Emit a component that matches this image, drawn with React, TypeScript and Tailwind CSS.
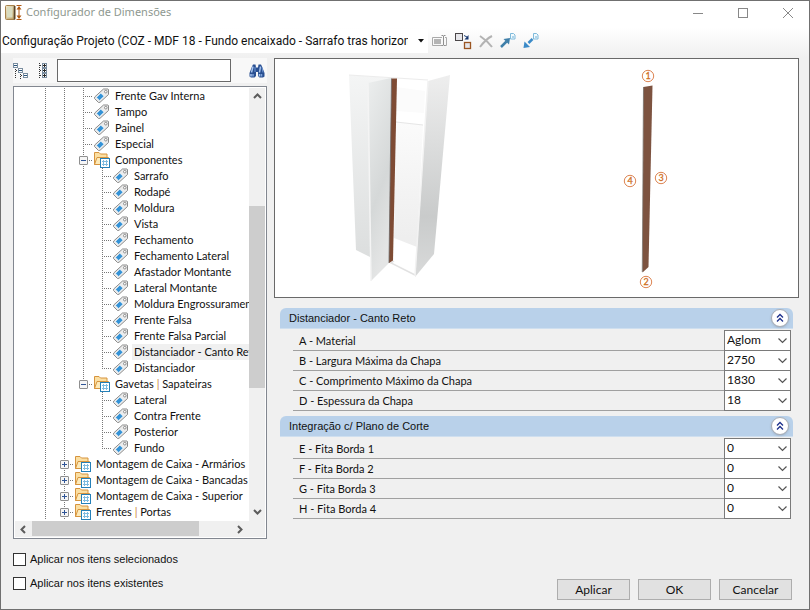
import { useState } from 'react'

type TreeItem = {
  label: string
  // vertical guide columns: 1 = line, 0 = blank
  guides: number[]
  node: 'leaf' | 'last' | 'open' | 'closed'
}

type Field = {
  label: string
  value: string
}

const leaf = (label: string, guides: number[]): TreeItem => ({ label, guides, node: 'leaf' })

const TREE: TreeItem[] = [
  ...['Frente Gav Interna', 'Tampo', 'Painel', 'Especial'].map((l) => leaf(l, [1, 1])),
  { label: 'Componentes', guides: [1, 1], node: 'open' },
  ...[
    'Sarrafo',
    'Rodapé',
    'Moldura',
    'Vista',
    'Fechamento',
    'Fechamento Lateral',
    'Afastador Montante',
    'Lateral Montante',
    'Moldura Engrossuramento',
    'Frente Falsa',
    'Frente Falsa Parcial',
    'Distanciador - Canto Reto',
  ].map((l) => leaf(l, [1, 1, 1])),
  { label: 'Distanciador', guides: [1, 1, 1], node: 'last' },
  { label: 'Gavetas | Sapateiras', guides: [1, 1], node: 'open' },
  ...['Lateral', 'Contra Frente', 'Posterior'].map((l) => leaf(l, [1, 1, 0])),
  { label: 'Fundo', guides: [1, 1, 0], node: 'last' },
  { label: 'Montagem de Caixa - Armários', guides: [1], node: 'closed' },
  { label: 'Montagem de Caixa - Bancadas', guides: [1], node: 'closed' },
  { label: 'Montagem de Caixa - Superior', guides: [1], node: 'closed' },
  { label: 'Frentes | Portas', guides: [1], node: 'closed' },
]

const MATERIAL: Field[] = [
  { label: 'A - Material', value: 'Aglom' },
  { label: 'B - Largura Máxima da Chapa', value: '2750' },
  { label: 'C - Comprimento Máximo da Chapa', value: '1830' },
  { label: 'D - Espessura da Chapa', value: '18' },
]

const CUTTING: Field[] = [
  { label: 'E - Fita Borda 1', value: '0' },
  { label: 'F - Fita Borda 2', value: '0' },
  { label: 'G - Fita Borda 3', value: '0' },
  { label: 'H - Fita Borda 4', value: '0' },
]

function AppIcon() {
  return (
    <svg width="18" height="16" viewBox="0 0 18 16" aria-hidden="true">
      <defs>
        <linearGradient id="cab" x1="0" y1="0" x2="1" y2="1">
          <stop offset="0" stopColor="#f3ead0" />
          <stop offset="1" stopColor="#b89a5c" />
        </linearGradient>
      </defs>
      <rect x="0.5" y="0.5" width="9.5" height="14" rx="1" fill="url(#cab)" stroke="#a8834c" />
      <rect x="2" y="2" width="5.5" height="10.5" fill="#d9dcc0" />
      <path d="M9.5 1v13.500" stroke="#57452d" strokeWidth="1.500" />
      <path d="M11.500 0.500h5M11.500 14.500h5M14 2v11" stroke="#b05a14" />
      <path d="M14 1l-2.500 3.500h5zM14 14l-2.500-3.500h5z" fill="#b05a14" />
    </svg>
  )
}

function RenameIcon() {
  return (
    <svg width="16" height="16" viewBox="0 0 16 16" fill="none" stroke="#a9a9a9" aria-hidden="true">
      <path d="M10 4.500H0.500v8H10M13 4.500h1.500v8H13" />
      <rect x="2" y="6" width="7" height="5" fill="#b4b4b4" stroke="none" />
      <path d="M9.500 2.500h1.500l0.500 0.500 0.500-0.500h1.500M11.500 3v9M9.500 12.500h1.500l0.500-0.500 0.500 0.500h1.500" stroke="#8f8f8f" />
    </svg>
  )
}

function CopyToIcon() {
  return (
    <svg width="17" height="17" viewBox="0 0 17 17" fill="none" aria-hidden="true">
      <rect x="0.500" y="0.500" width="7" height="7" fill="#e6e6ea" stroke="#4a4648" />
      <rect x="9.500" y="9.500" width="6" height="6" fill="#e6e6ea" stroke="#9a5420" strokeWidth="1.300" />
      <path d="M9 2.500l3 1.500" stroke="#1d3f78" />
      <path d="M13.500 2v4.500H9.500z" fill="#16356e" />
    </svg>
  )
}

function DeleteIcon() {
  return (
    <svg width="14" height="13" viewBox="0 0 14 13" aria-hidden="true">
      <path d="M1 1c3 2 9 7 12 11M13 1C9 3 4 8 1 12" stroke="#b3b3b3" strokeWidth="2" fill="none" />
    </svg>
  )
}

function ArrowIcon({ out }: { out?: boolean }) {
  return (
    <svg width="16" height="16" viewBox="0 0 16 16" aria-hidden="true">
      <path d="M10.500 0.500h3l1.500 1.500v4h-4.500z" fill="#f3fafd" stroke="#7fbadb" />
      <path d="M12 3.500h2M12 4.500h2" stroke="#7fbadb" strokeWidth="0.600" />
      {out ? (
        <path d="M9.500 6L5.500 10" stroke="#3a8ac8" strokeWidth="2.500" />
      ) : (
        <path d="M1 14l5.500-5.500" stroke="#3f7fa9" strokeWidth="2.500" />
      )}
      {out ? (
        <path d="M0.500 15l1-6.500 5.500 5.500z" fill="#3a8ac8" />
      ) : (
        <path d="M10 5l-1 6.500L3.500 6z" fill="#3f7fa9" />
      )}
    </svg>
  )
}

function CollapseTreeIcon() {
  return (
    <svg width="16" height="16" viewBox="0 0 16 16" fill="none" shapeRendering="crispEdges" aria-hidden="true">
      <g fill="#fff" stroke="#7b8ea0">
        <rect x="0.500" y="0.500" width="4" height="4" />
        <rect x="5.500" y="5.500" width="4" height="4" />
        <rect x="10.500" y="10.500" width="4" height="4" />
      </g>
      <path d="M1 2.500h3M6 7.500h3M11 12.500h3" stroke="#29557d" />
      <path d="M2.500 6v10M7.500 11v5" stroke="#333" strokeDasharray="1 1" />
      <path d="M3 7.500h2M8 12.500h2" stroke="#333" strokeDasharray="1 1" />
    </svg>
  )
}

function ExpandTreeIcon() {
  return (
    <svg width="9" height="16" viewBox="0 0 9 16" fill="none" shapeRendering="crispEdges" aria-hidden="true">
      <path d="M0.500 0v16" stroke="#333" strokeDasharray="1 1" />
      <g fill="#fff" stroke="#7b8ea0">
        <rect x="3.500" y="0.500" width="4" height="4" />
        <rect x="3.500" y="5.500" width="4" height="4" />
        <rect x="3.500" y="10.500" width="4" height="4" />
      </g>
      <path d="M4 2.500h3M4 7.500h3M4 12.500h3M5.500 1v3M5.500 6v3M5.500 11v3" stroke="#222" />
      <path d="M1 2.500h2M1 7.500h2M1 12.500h2" stroke="#333" strokeDasharray="1 1" />
    </svg>
  )
}

function BinocularsIcon() {
  return (
    <svg width="16" height="14" viewBox="0 0 16 14" aria-hidden="true">
      <path d="M3 2.500L4 0.500h2.500l0.500 3h2l0.500-3H12l1 2 2.500 6.500v3.500L14 13.500h-3.500L9 12V8H7v4l-1.500 1.500H2L0.500 12.500V9z" fill="#294f91" />
      <path d="M4 2.500L2.500 8.500M11.500 2.500l-1 6M2 10v2.500M10.500 10v2.500" stroke="#a6c4ee" strokeWidth="1.500" />
      <path d="M6 3v5M13 3.500l1 5" stroke="#6f97d4" />
      <path d="M4 10v2.500M12.500 10v2.500" stroke="#7da2da" strokeWidth="1.500" />
    </svg>
  )
}

function TagIcon() {
  return (
    <svg width="17" height="16" viewBox="0 0 17 16" className="shrink-0" aria-hidden="true">
      <path d="M10.500 1H15l0.500 0.500v5L7 14.300l-1.500 0.200-4-4 0.200-1.500z" fill="#ececec" stroke="#8b8b8b" />
      <path d="M7.800 5.200l3.200 3-4.400 4.200-3.100-3z" fill="#3492d6" stroke="#fff" strokeWidth="0.500" />
      <circle cx="12.800" cy="3.700" r="1.300" fill="#fff" stroke="#858585" strokeWidth="0.900" />
    </svg>
  )
}

function FolderIcon() {
  return (
    <svg width="17" height="16" viewBox="0 0 17 16" className="shrink-0" aria-hidden="true">
      <path d="M1.500 12.500v-12H6l1.500 1.500h6.500v10z" fill="#fbdfa2" stroke="#d6943e" />
      <path d="M1.500 12.500l2.500-7h11.500l-2 7z" fill="#fdeab9" stroke="#d6943e" />
      <rect x="7.500" y="6.500" width="9" height="9" fill="#fff" stroke="#2580b8" />
      <path d="M9 9.500h6M9 12.500h6M10.500 8v6M13.500 8v6" stroke="#7dbbe0" />
    </svg>
  )
}

function Guide({ on }: { on: boolean }) {
  return (
    <svg width="19" height="16" viewBox="0 0 19 16" className="shrink-0" aria-hidden="true">
      {on && <path d="M9.500 0v16" stroke="#777" strokeDasharray="1 1" />}
    </svg>
  )
}

function Branch({ last }: { last?: boolean }) {
  return (
    <svg width="19" height="16" viewBox="0 0 19 16" className="shrink-0" aria-hidden="true">
      <path d={last ? 'M9.500 0v9' : 'M9.500 0v16'} stroke="#777" strokeDasharray="1 1" />
      <path d="M11 8.500h8" stroke="#777" strokeDasharray="1 1" />
    </svg>
  )
}

function Expander({ open, label, last }: { open: boolean; label: string; last: boolean }) {
  return (
    <button type="button" aria-label={`${open ? 'Recolher' : 'Expandir'} ${label}`} className="shrink-0">
      <svg width="19" height="16" viewBox="0 0 19 16" className="block" aria-hidden="true">
        <path d={last ? 'M9.500 0v4' : 'M9.500 0v16'} stroke="#777" strokeDasharray="1 1" />
        <path d="M15 8.500h4" stroke="#777" strokeDasharray="1 1" />
        <rect x="5.500" y="4.500" width="8" height="8" rx="0.500" fill="#f6f6f6" stroke="#8f8f8f" />
        <path d={open ? 'M7 8.500h5' : 'M7 8.500h5M9.500 6v5'} stroke="#2f5597" />
      </svg>
    </button>
  )
}

function TreeRow({ item, selected, onSelect }: { item: TreeItem; selected: boolean; onSelect: () => void }) {
  const isFolder = item.node === 'open' || item.node === 'closed'
  const parts = item.label.split('|')
  return (
    <li role="treeitem" aria-selected={selected} className="flex h-4 items-center pl-[21px]">
      {item.guides.map((g, i) => (
        <Guide key={i} on={g === 1} />
      ))}
      {isFolder ? (
        <Expander open={item.node === 'open'} label={item.label} last={item.label.startsWith('Gavetas')} />
      ) : (
        <Branch last={item.node === 'last'} />
      )}
      {isFolder ? <FolderIcon /> : <TagIcon />}
      <button
        type="button"
        onClick={onSelect}
        className={`ml-[3px] h-4 px-0.5 leading-4 whitespace-nowrap ${selected ? 'bg-[#f0f0f0]' : ''}`}
      >
        {parts[0]}
        {parts.length > 1 && (
          <>
            <span className="text-[#c9813c]">|</span>
            {parts[1]}
          </>
        )}
      </button>
    </li>
  )
}

function ScrollArrow({ d, label }: { d: string; label: string }) {
  return (
    <button type="button" aria-label={label} className="flex size-4 shrink-0 items-center justify-center">
      <svg width="9" height="9" viewBox="0 0 9 9" aria-hidden="true">
        <path d={d} fill="none" stroke="#5c5c5c" strokeWidth="2" />
      </svg>
    </button>
  )
}

function Tree() {
  const [selected, setSelected] = useState('Distanciador - Canto Reto')
  return (
    <div className="border border-[#828790] bg-white p-px">
      <div className="flex">
        <ul role="tree" aria-label="Itens" className="min-w-0 flex-1 overflow-hidden pb-px">
          {TREE.map((item) => (
            <TreeRow
              key={item.label}
              item={item}
              selected={item.label === selected}
              onSelect={() => setSelected(item.label)}
            />
          ))}
        </ul>
        <div className="flex w-4 shrink-0 flex-col justify-between bg-[#f0f0f0] pb-0.5">
          <ScrollArrow d="M1 6l3.500-3.500L8 6" label="Rolar para cima" />
          <div className="flex-1">
            <div className="mt-[102px] h-[182px] bg-[#cdcdcd]" />
          </div>
          <ScrollArrow d="M1 3l3.500 3.500L8 3" label="Rolar para baixo" />
        </div>
      </div>
      <div className="flex h-4 bg-[#f0f0f0] pr-[18px]">
        <ScrollArrow d="M6 1L2.500 4.500 6 8" label="Rolar para a esquerda" />
        <div className="flex-1">
          <div className="ml-px h-[15px] w-[167px] bg-[#cdcdcd]" />
        </div>
        <ScrollArrow d="M3 1l3.500 3.500L3 8" label="Rolar para a direita" />
      </div>
    </div>
  )
}

function Marker({ x, y, n }: { x: number; y: number; n: number }) {
  return (
    <g>
      <circle cx={x} cy={y} r="5.700" fill="#fff" stroke="#dd8452" />
      <text x={x} y={y + 3} textAnchor="middle" fontSize="9" fill="#d0701f" stroke="#d0701f" strokeWidth="0.300">
        {n}
      </text>
    </g>
  )
}

function Preview() {
  return (
    <div className="border border-[#696969] bg-white">
      <svg viewBox="0 0 523 238" className="block w-full" role="img" aria-label="Vista da peça">
        <defs>
          <linearGradient id="side" x1="0" y1="0" x2="0" y2="1">
            <stop offset="0" stopColor="#f4f5f5" />
            <stop offset="1" stopColor="#dcdede" />
          </linearGradient>
          <linearGradient id="door" x1="0" y1="0" x2="0.300" y2="1">
            <stop offset="0" stopColor="#eceeee" />
            <stop offset="0.650" stopColor="#d5d8d8" />
            <stop offset="1" stopColor="#e4e5e5" />
          </linearGradient>
          <linearGradient id="right" x1="0" y1="0" x2="0" y2="1">
            <stop offset="0" stopColor="#eeeeee" />
            <stop offset="0.700" stopColor="#c9cbcb" />
            <stop offset="1" stopColor="#d9dada" />
          </linearGradient>
          <linearGradient id="back" x1="0" y1="0" x2="0" y2="1">
            <stop offset="0" stopColor="#fbfbfb" />
            <stop offset="1" stopColor="#ededed" />
          </linearGradient>
        </defs>
        <path d="M74 16l42 3v180l-21-1-14-7z" fill="url(#side)" />
        <path d="M74 16l79 5" stroke="#ececec" />
        <path d="M121 28l29 4-1 22-28-2z" fill="#fbfbfb" />
        <path d="M121 63l27 3-6 122-23-9z" fill="url(#back)" />
        <path d="M121 63l27 3" stroke="#e6e6e6" />
        <path d="M119 202l-3 2 24 12" stroke="#e2e2e2" strokeWidth="1.500" fill="none" />
        <path d="M93 24l23-5-2 185-18 18z" fill="url(#door)" />
        <path d="M93 24l3 198" stroke="#f4f4f4" strokeWidth="1.500" />
        <path d="M153 22l22-6-16 179-19 23z" fill="url(#right)" />
        <path d="M153 22l-13 195" stroke="#f2f2f2" strokeWidth="1.500" />
        <path d="M116.500 19.500h5.500l-4 182-4 2.500z" fill="#7e4b34" />
        <path d="M116.500 19.500L114 204" stroke="#6b6664" strokeWidth="0.800" />
        <path d="M368.500 28l9-1.500-4 181.500-6 5.500z" fill="#7d5340" />
        <path d="M368.500 28l-1.200 185" stroke="#77706a" strokeWidth="0.800" />
        <Marker x={373} y={17} n={1} />
        <Marker x={371} y={223} n={2} />
        <Marker x={386} y={119} n={3} />
        <Marker x={355} y={122} n={4} />
      </svg>
    </div>
  )
}

function FieldRow({ field }: { field: Field }) {
  const id = `campo-${field.label[0]}`
  return (
    <div className="flex h-5">
      <label htmlFor={id} className="flex-1 border-b border-[#a0a0a0] pl-1.5 leading-5">
        {field.label}
      </label>
      <div className="relative -mt-px">
        <select
          id={id}
          defaultValue={field.value}
          className="block h-[21px] w-[67px] appearance-none border border-[#7a7a7a] bg-white pb-0.5 pl-0.5 text-xs"
        >
          <option>{field.value}</option>
        </select>
        <svg width="9" height="6" viewBox="0 0 9 6" className="pointer-events-none absolute top-2 right-1" aria-hidden="true">
          <path d="M0.500 0.500l4 4 4-4" fill="none" stroke="#555" strokeWidth="1.200" />
        </svg>
      </div>
    </div>
  )
}

function Section({ title, fields }: { title: string; fields: Field[] }) {
  const [open, setOpen] = useState(true)
  return (
    <section>
      <div className="flex h-[21px] items-center justify-between rounded-t-md border-b border-[#cfdfef] bg-[#b9d1ea] pr-1 pl-[9px]">
        <h2 className="font-['Liberation_Sans',sans-serif]">{title}</h2>
        <button
          type="button"
          aria-expanded={open}
          aria-label={title}
          onClick={() => setOpen(!open)}
          className="flex size-[18px] items-center justify-center rounded-full border border-[#a9adb5] bg-white shadow"
        >
          <svg width="8" height="10" viewBox="0 0 8 10" fill="none" stroke="#1c2f8c" strokeWidth="1.300" aria-hidden="true">
            <path d="M1 4.500l3-3 3 3M1 8.500l3-3 3 3" />
          </svg>
        </button>
      </div>
      {open && (
        <div className="mt-0.5 ml-[13px] pr-0.5">
          {fields.map((field) => (
            <FieldRow key={field.label} field={field} />
          ))}
        </div>
      )}
    </section>
  )
}

export default function App() {
  return (
    <div className="flex min-h-screen flex-col border border-[#707070] bg-[#f0f0f0] font-[Lato,sans-serif] text-[11px] text-[#111]">
      <header className="flex h-[27px] items-center justify-between bg-white pr-4 pb-1 pl-1">
        <div className="flex items-center gap-[3px]">
          <AppIcon />
          <h1 className="font-['Noto_Sans',sans-serif] text-[11px] text-[#8e9890]">Configurador de Dimensões</h1>
        </div>
        <div className="flex gap-[35px] text-[#888]">
          <button type="button" aria-label="Minimizar">
            <svg width="10" height="10" viewBox="0 0 10 10" fill="none" stroke="currentColor" aria-hidden="true">
              <path d="M0 5.500h10" />
            </svg>
          </button>
          <button type="button" aria-label="Maximizar">
            <svg width="10" height="10" viewBox="0 0 10 10" fill="none" stroke="currentColor" aria-hidden="true">
              <rect x="0.500" y="0.500" width="9" height="9" />
            </svg>
          </button>
          <button type="button" aria-label="Fechar">
            <svg width="10" height="10" viewBox="0 0 10 10" fill="none" stroke="currentColor" aria-hidden="true">
              <path d="M0 0l10 10M10 0L0 10" />
            </svg>
          </button>
        </div>
      </header>

      <div className="flex h-[30px] items-start bg-gradient-to-b from-white to-[#f0f0f0] pt-px">
        <div className="relative">
          <select
            aria-label="Configuração"
            className="block h-6 w-[427px] appearance-none bg-white pr-5 pl-px font-[Roboto,sans-serif] text-xs"
          >
            <option>Configuração Projeto (COZ - MDF 18 - Fundo encaixado - Sarrafo tras horizontal)</option>
          </select>
          <svg width="6" height="4" viewBox="0 0 6 4" className="pointer-events-none absolute top-2.5 right-1" aria-hidden="true">
            <path d="M0 0h6L3 3.500z" fill="#111" />
          </svg>
        </div>
        <div className="ml-1 flex h-6 items-center gap-[7px]">
          <button type="button" aria-label="Renomear">
            <RenameIcon />
          </button>
          <button type="button" aria-label="Copiar para">
            <CopyToIcon />
          </button>
          <button type="button" aria-label="Excluir">
            <DeleteIcon />
          </button>
          <button type="button" aria-label="Exportar">
            <ArrowIcon />
          </button>
          <button type="button" aria-label="Importar">
            <ArrowIcon out />
          </button>
        </div>
      </div>

      <main className="flex flex-1 gap-[7px] pr-2.5 pb-[9px] pl-3">
        <div className="w-[254px] shrink-0">
          <div className="mb-[3px] flex h-[25px] items-center bg-[#f8f8f8] pr-0.5">
            <button type="button" aria-label="Recolher tudo">
              <CollapseTreeIcon />
            </button>
            <button type="button" aria-label="Expandir tudo" className="mr-[9px] ml-2.5">
              <ExpandTreeIcon />
            </button>
            <input
              type="text"
              aria-label="Pesquisar"
              className="h-[23px] w-[174px] border border-[#696969] bg-white px-1 outline-none"
            />
            <button type="button" aria-label="Buscar" className="ml-auto">
              <BinocularsIcon />
            </button>
          </div>
          <Tree />
          <div className="mt-2 font-['Liberation_Sans',sans-serif]">
            {['Aplicar nos itens selecionados', 'Aplicar nos itens existentes'].map((label) => (
              <label key={label} className="flex h-6 items-center gap-1">
                <input type="checkbox" className="size-[13px] appearance-none border border-[#333] bg-white checked:bg-[#333]" />
                {label}
              </label>
            ))}
          </div>
        </div>

        <div className="flex min-w-0 flex-1 flex-col">
          <Preview />
          <div className="mt-2.5 flex flex-col gap-[5px] pr-1.5 pl-1.5">
            <Section title="Distanciador - Canto Reto" fields={MATERIAL} />
            <Section title="Integração c/ Plano de Corte" fields={CUTTING} />
          </div>
          <div className="mt-auto flex justify-end gap-2 pr-[7px] text-xs">
            {['Aplicar', 'OK', 'Cancelar'].map((label) => (
              <button key={label} type="button" className="h-[21px] w-[73px] border border-[#adadad] bg-[#e1e1e1]">
                {label}
              </button>
            ))}
          </div>
        </div>
      </main>
    </div>
  )
}
